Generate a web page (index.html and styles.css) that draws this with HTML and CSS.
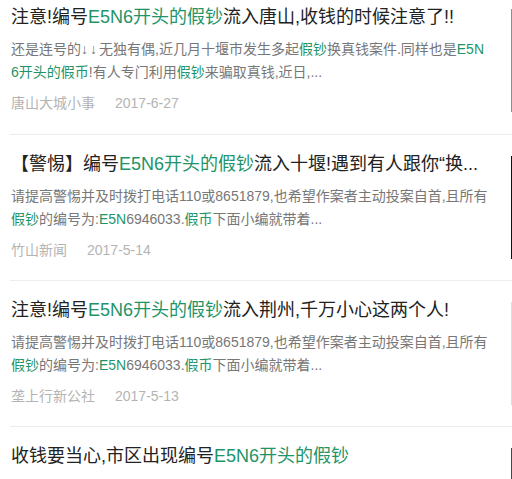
FILE: index.html
```html
<!DOCTYPE html>
<html lang="zh-CN">
<head>
  <meta charset="UTF-8" />
  <meta name="viewport" content="width=device-width, initial-scale=1.0"/>
  <title>搜索结果</title>
  <link rel="stylesheet" href="styles.css">
</head>
<body>
  <ul class="news-list">
    <li class="news-item first">
      <div class="txt-box">
        <h3>注意!编号<em>E5N6开头的假钞</em>流入唐山,收钱的时候注意了!!</h3>
        <p class="summary">还是连号的<span class="arrows">↓↓</span>无独有偶,近几月十堰市发生多起<em>假钞</em>换真钱案件.同样也是<em>E5N6开头的假币</em>!有人专门利用<em>假钞</em>来骗取真钱,近日,...</p>
        <div class="meta"><span class="account">唐山大城小事</span><span class="date">2017-6-27</span></div>
      </div>
      <div class="thumb thumb-gray"></div>
    </li>
    <li class="news-item">
      <div class="txt-box">
        <h3>【警惕】编号<em>E5N6开头的假钞</em>流入十堰!遇到有人跟你“换...</h3>
        <p class="summary">请提高警惕并及时拨打电话110或8651879,也希望作案者主动投案自首,且所有<em>假钞</em>的编号为:<em>E5N</em>6946033.<em>假币</em>下面小编就带着...</p>
        <div class="meta"><span class="account">竹山新闻</span><span class="date">2017-5-14</span></div>
      </div>
      <div class="thumb thumb-black"></div>
    </li>
    <li class="news-item">
      <div class="txt-box">
        <h3>注意!编号<em>E5N6开头的假钞</em>流入荆州,千万小心这两个人!</h3>
        <p class="summary">请提高警惕并及时拨打电话110或8651879,也希望作案者主动投案自首,且所有<em>假钞</em>的编号为:<em>E5N</em>6946033.<em>假币</em>下面小编就带着...</p>
        <div class="meta"><span class="account">垄上行新公社</span><span class="date">2017-5-13</span></div>
      </div>
      <div class="thumb thumb-pink"></div>
    </li>
    <li class="news-item">
      <div class="txt-box">
        <h3>收钱要当心,市区出现编号<em>E5N6开头的假钞</em></h3>
      </div>
      <div class="thumb thumb-red"></div>
    </li>
  </ul>
</body>
</html>
```

FILE: styles.css
```css
body {
  margin: 0;
  background: #fff;
  font-family: "Liberation Sans", "Noto Sans CJK SC", sans-serif;
  overflow: hidden;
}

.news-list {
  list-style: none;
  margin: 0 0 0 10px;
  padding: 0;
}

.news-item {
  display: flex;
  height: 146px;
  box-sizing: border-box;
  border-top: 1px solid #ededed;
}

.news-item.first {
  margin-top: -12px;
  border-top: none;
}

.txt-box {
  width: 478px;
  flex-shrink: 0;
  padding: 17px 7px 0 1px;
}

.txt-box h3 {
  margin: 0;
  font-size: 18px;
  font-weight: normal;
  line-height: 24px;
  color: #222;
  white-space: nowrap;
}

em {
  font-style: normal;
  color: #1e9468;
}

.summary {
  margin: 9px 0 0;
  font-size: 14px;
  line-height: 23px;
  color: #777;
  word-break: break-all;
}

.arrows {
  letter-spacing: 2px;
}

.meta {
  margin-top: 9px;
  font-size: 14px;
  line-height: 20px;
  color: #b4b4b4;
}

.date {
  margin-left: 20px;
}

.thumb {
  width: 140px;
  height: 103px;
  margin-top: 21px;
  margin-left: 15px;
  flex-shrink: 0;
}

.thumb-gray { border-left: 1px solid #8e8e8e; background: #fbfaf6; }
.thumb-black { border-left: 1px solid #111; background: #fdfcf7; }
.thumb-pink { border-left: 1px solid #e6d8dc; background: #fbf8f8; }
.thumb-red { border-left: 1px solid #7a3434; background: #f7f1f1; }
```
